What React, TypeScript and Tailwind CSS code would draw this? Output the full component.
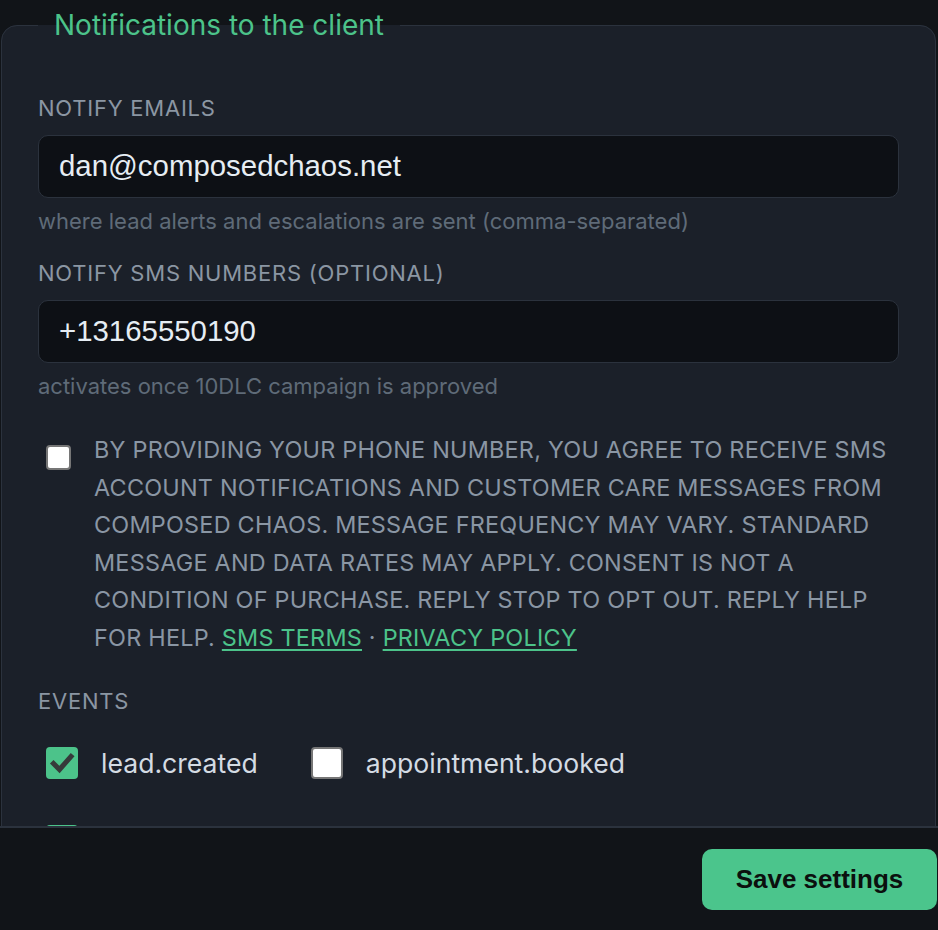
import React from 'react';

const FONT = { fontFamily: 'Inter, "Noto Sans", sans-serif' };
const FORM_FONT = { fontFamily: '"Liberation Sans", Arial, sans-serif' };

function Check({ checked }: { checked?: boolean }) {
  if (checked) {
    return (
      <span className="ml-2 flex h-[32px] w-[32px] shrink-0 items-center justify-center rounded-[4px] bg-[#4cc38a]">
        <svg viewBox="0 0 32 32" className="h-[32px] w-[32px]" aria-hidden="true">
          <path d="M7.5 16.5 L13.5 22.5 L25 9.5" fill="none" stroke="#363a3a" strokeWidth="5" strokeLinecap="square" />
        </svg>
      </span>
    );
  }
  return <span className="ml-2 block h-[32px] w-[32px] shrink-0 rounded-[4px] border-2 border-[#767676] bg-white" />;
}

function Field({ label, value, hint, first }: { label: string; value: string; hint: string; first?: boolean }) {
  return (
    <div className={first ? '' : 'mt-[22px]'}>
      <div className="text-[22px] leading-[30px] uppercase tracking-[0.035em] text-[#8b96a3]">{label}</div>
      <div
        className="mt-[12px] flex h-[63px] items-center rounded-[10px] border border-[#2b323d] bg-[#0d1015] px-5 text-[29.4px] text-[#e6edf3]"
        style={FORM_FONT}
      >
        {value}
      </div>
      <div className="mt-[8px] text-[22px] leading-[30px] text-[#5f6b78]">{hint}</div>
    </div>
  );
}

export default function App() {
  const events = [
    { name: 'lead.created', checked: true },
    { name: 'appointment.booked', checked: false },
    { name: 'lead.escalated', checked: true },
  ];

  return (
    <div className="flex h-[930px] flex-col overflow-hidden bg-[#111418]" style={FONT}>
      <main className="min-h-0 flex-1 overflow-hidden pl-px pt-[9px]">
        <fieldset className="m-0 w-[935px] rounded-[16px] border border-[#2b323d] bg-[#1b2029] px-[36px] pb-10 pt-[52px]">
          <legend className="px-4 text-[28px] leading-[32px] text-[#4cc38a]">Notifications to the client</legend>

          <Field
            first
            label="Notify emails"
            value="dan@composedchaos.net"
            hint="where lead alerts and escalations are sent (comma-separated)"
          />
          <Field
            label="Notify SMS numbers (optional)"
            value="+13165550190"
            hint="activates once 10DLC campaign is approved"
          />

          <label className="mt-[30px] flex items-start gap-[23px]">
            <span className="ml-2 mt-[14px] block h-[25px] w-[25px] shrink-0 rounded-[4px] border-2 border-[#767676] bg-white" />
            <span className="text-[23.4px] leading-[37.5px] uppercase tracking-[0.01em] text-[#8a96a4]">
              By providing your phone number, you agree to receive SMS account notifications and customer care
              messages from Composed Chaos. Message frequency may vary. Standard message and data rates may apply.
              Consent is not a condition of purchase. Reply STOP to opt out. Reply HELP for help.{' '}
              <a href="#" className="text-[#4cc38a] underline underline-offset-[3px]">SMS terms</a>
              {' · '}
              <a href="#" className="text-[#4cc38a] underline underline-offset-[3px]">Privacy policy</a>
            </span>
          </label>

          <div className="mt-[30px] text-[22px] leading-[30px] uppercase tracking-[0.035em] text-[#8b96a3]">Events</div>
          <div className="mt-[31px] flex flex-wrap gap-x-[45px] gap-y-[46px]">
            {events.map((ev) => (
              <label key={ev.name} className="flex items-center gap-[23px]">
                <Check checked={ev.checked} />
                <span className="text-[26.6px] leading-[32px] text-[#d4dbe3]">{ev.name}</span>
              </label>
            ))}
          </div>
        </fieldset>
      </main>

      <footer className="flex h-[104px] shrink-0 items-center justify-end border-t-2 border-[#2b323d] bg-[#111418] pr-px">
        <button
          className="h-[61px] w-[235px] rounded-[10px] bg-[#4bc58c] text-[26px] font-bold text-[#0b100e]"
          style={FORM_FONT}
        >
          Save settings
        </button>
      </footer>
    </div>
  );
}
